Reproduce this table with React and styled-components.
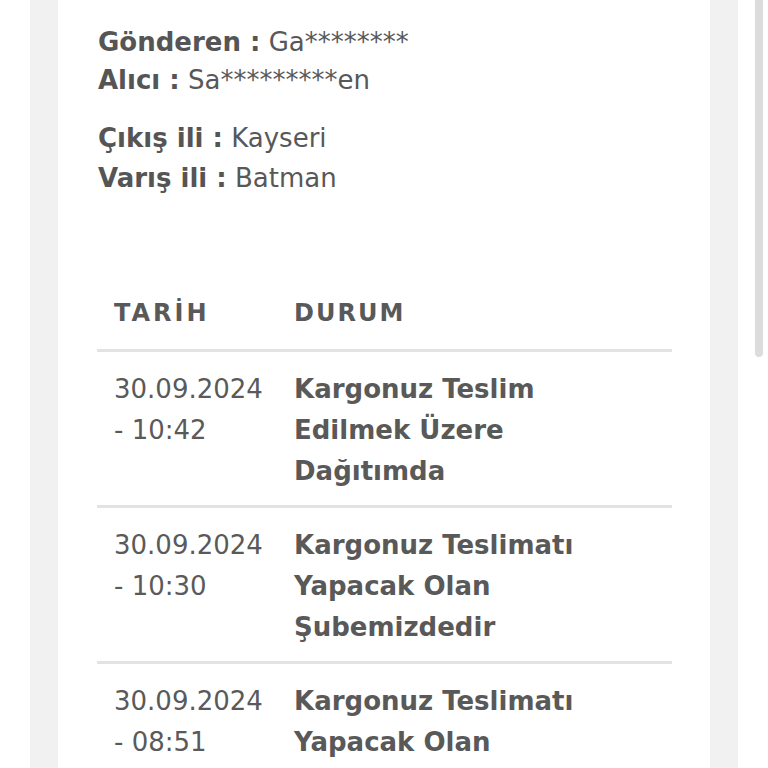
import React from "react";
import styled, { createGlobalStyle } from "styled-components";

const GlobalStyle = createGlobalStyle`
  html, body {
    margin: 0;
    padding: 0;
    background: #ffffff;
    font-family: "DejaVu Sans", "Noto Sans", sans-serif;
    color: #585858;
    height: 768px;
    overflow: hidden;
  }
`;

const Page = styled.div`
  height: 768px;
  padding-left: 30px;
  display: flex;
`;

const Column = styled.div`
  width: 708px;
  height: 100%;
  background: #f1f1f1;
  padding: 0 28px;
  box-sizing: border-box;
`;

const Card = styled.div`
  background: #ffffff;
  height: 100%;
  padding: 23px 38px 0 40px;
  box-sizing: border-box;
`;

const InfoGroup = styled.div`
  margin-bottom: ${(p) => p.gap || 0}px;
`;

const InfoLine = styled.div`
  font-size: 26px;
  line-height: ${(p) => p.lh || 38}px;
  white-space: nowrap;
  b {
    font-weight: 700;
    color: #555555;
  }
`;

const Table = styled.div`
  margin-top: 95px;
  margin-left: -1px;
`;

const Row = styled.div`
  display: grid;
  grid-template-columns: 180px 1fr;
  padding: ${(p) => (p.head ? "0 0 15px 17px" : "17px 0 13px 17px")};
  border-bottom: 3px solid #e3e3e3;
  font-size: 26px;
  line-height: 41px;
`;

const HeadCell = styled.div`
  font-size: 24px;
  font-weight: 700;
  letter-spacing: ${(p) => p.spacing}px;
  color: #595959;
`;

const DateCell = styled.div`
  color: #5a5a5a;
`;

const StatusCell = styled.div`
  font-weight: 700;
  color: #595959;
  max-width: 300px;
`;

const ScrollThumb = styled.div`
  position: fixed;
  top: 0;
  left: 755px;
  width: 8px;
  height: 357px;
  background: #dcdcdc;
  border-radius: 0 0 4px 4px;
`;

const movements = [
  { date: "30.09.2024", time: "- 10:42", status: "Kargonuz Teslim Edilmek Üzere Dağıtımda" },
  { date: "30.09.2024", time: "- 10:30", status: "Kargonuz Teslimatı Yapacak Olan Şubemizdedir" },
  { date: "30.09.2024", time: "- 08:51", status: "Kargonuz Teslimatı Yapacak Olan Şubemizdedir" },
];

const App = () => {
  return (
    <>
      <GlobalStyle />
      <Page>
        <Column>
          <Card>
            <InfoGroup gap={19}>
              <InfoLine>
                <b>Gönderen :</b> Ga********
              </InfoLine>
              <InfoLine>
                <b>Alıcı :</b> Sa*********en
              </InfoLine>
            </InfoGroup>
            <InfoGroup>
              <InfoLine lh={40}>
                <b>Çıkış ili :</b> Kayseri
              </InfoLine>
              <InfoLine lh={40}>
                <b>Varış ili :</b> Batman
              </InfoLine>
            </InfoGroup>

            <Table>
              <Row head>
                <HeadCell spacing={3}>TARİH</HeadCell>
                <HeadCell spacing={2}>DURUM</HeadCell>
              </Row>
              {movements.map((m, i) => (
                <Row key={i}>
                  <DateCell>
                    {m.date}
                    <br />
                    {m.time}
                  </DateCell>
                  <StatusCell>{m.status}</StatusCell>
                </Row>
              ))}
            </Table>
          </Card>
        </Column>
        <ScrollThumb />
      </Page>
    </>
  );
};

export default App;
